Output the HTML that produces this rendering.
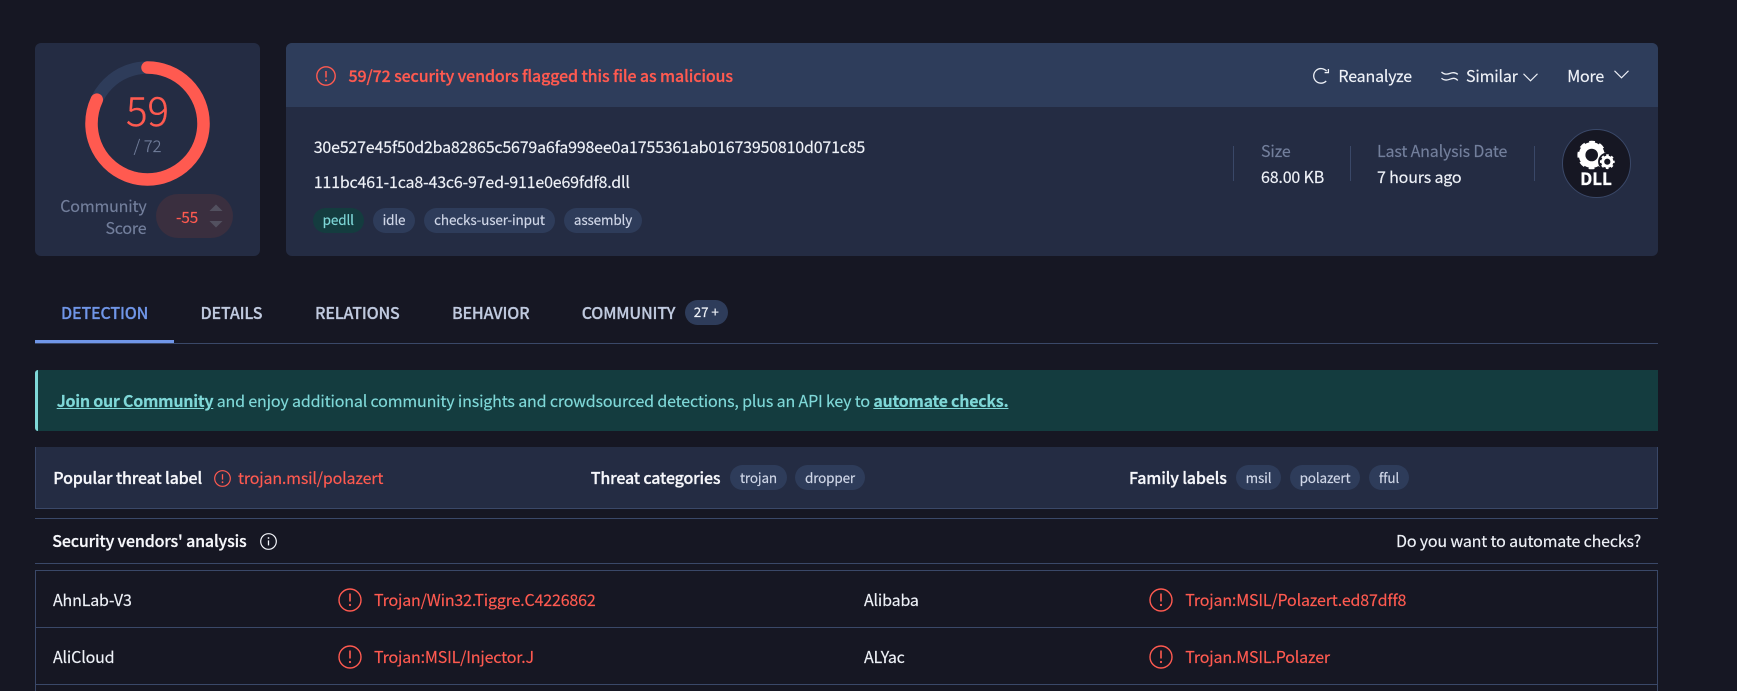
<!DOCTYPE html>
<html lang="en"><head><meta charset="utf-8"><title>Detection</title>
<style>
html,body{margin:0;padding:0;background:#161723;width:1737px;height:691px;overflow:hidden}
body{position:relative;font-family:"Noto Sans CJK JP","Noto Sans CJK SC","Liberation Sans",sans-serif;font-size:16px;color:#eef1f7}
div,svg,span.a{position:absolute}
.t{white-space:nowrap;line-height:24px;height:24px;letter-spacing:-.17px;-webkit-text-stroke:.15px currentColor}
.m{font-weight:500;color:#f6f7fb;-webkit-text-stroke:.25px currentColor}
.r{color:#ff5a50}
.g{color:#737f9c}
.p{height:25px;line-height:24px;border-radius:13px;background:#2e3c5a;text-align:center;font-size:13.5px;letter-spacing:-.15px;color:#d0d7e8;white-space:nowrap;-webkit-text-stroke:.15px currentColor}
.u{line-height:23px}
.tab{font-weight:500;font-size:16px;color:#c0cadf;-webkit-text-stroke:.25px currentColor}
.ln{background:#3a4868;height:1px}
.sep{background:#3a4868;width:1px;height:35px;top:146px}
svg{overflow:visible}
a{color:inherit;font-weight:700;text-decoration:underline;letter-spacing:-.26px}
</style></head><body>

<div style="left:35px;top:43px;width:225px;height:213px;background:#242c43;border-radius:6px"></div>
<svg style="left:0;top:0" width="300" height="260"><circle cx="147.5" cy="123.5" r="56" fill="none" stroke="#2e3c5a" stroke-width="12.5"/><circle cx="147.5" cy="123.5" r="56" fill="none" stroke="#ff5a50" stroke-width="12.5" stroke-linecap="round" stroke-dasharray="288.2 351.9" transform="rotate(-90 147.5 123.5)"/></svg>
<div class="t r" style="left:85px;width:125px;text-align:center;top:85px;font-size:40px;line-height:48px;height:48px;font-weight:300;letter-spacing:0;-webkit-text-stroke:.4px #ff5a50">59</div>
<div class="t g" style="left:85px;width:125px;text-align:center;top:132.5px;font-size:16.5px;font-weight:300;letter-spacing:0">/ 72</div>
<div class="t g" style="left:40px;width:106.5px;text-align:right;top:193px">Community</div>
<div class="t g" style="left:40px;width:106.5px;text-align:right;top:215px">Score</div>
<div style="left:156px;top:194px;width:77px;height:44px;border-radius:22px;background:#3a2f3f"></div>
<div class="t r" style="left:176px;top:204.5px;font-size:15.5px">-55</div>
<svg style="left:0;top:0" width="300" height="260"><path d="M209.5 211 L216 204.5 L222.5 211Z" fill="#52505f"/><path d="M209.5 221 L216 227.5 L222.5 221Z" fill="#52505f"/></svg>

<div style="left:286px;top:43px;width:1372px;height:213px;background:#242c43;border-radius:6px"></div>
<div style="left:286px;top:43px;width:1372px;height:64px;background:#2e3d5b;border-radius:6px 6px 0 0"></div>
<svg style="left:316px;top:66px" width="20" height="20" viewBox="0 0 20 20"><circle cx="10" cy="10" r="9.2" fill="none" stroke="#ff5a50" stroke-width="1.4"/><path d="M10 5v6.5" stroke="#ff5a50" stroke-width="1.5"/><circle cx="10" cy="14.4" r="1" fill="#ff5a50"/></svg>
<div class="t r" style="left:348.5px;top:63px;font-weight:500;letter-spacing:-.125px;-webkit-text-stroke:.25px #ff5a50">59/72 security vendors flagged this file as malicious</div>

<svg style="left:1314px;top:68px" width="17" height="17" viewBox="0 0 17 17"><path d="M12.6 3.2A7.3 7.3 0 1 0 12.2 13" fill="none" stroke="#eef1f7" stroke-width="1.3"/><path d="M14.4 1V4.6H10.6" fill="none" stroke="#eef1f7" stroke-width="1.3"/></svg>
<div class="t" style="left:1338.4px;top:63px">Reanalyze</div>
<svg style="left:1441px;top:70.5px" width="18" height="11" viewBox="0 0 18 11"><path d="M0.5 1C3.5 4 6.5 3.4 9 2.4S14 1 16.8 3.4M0.5 7.2C3 9.6 6 9.4 9 8.2S14 6.6 16.8 9.4" fill="none" stroke="#eef1f7" stroke-width="1.3"/></svg>
<div class="t" style="left:1466px;top:63px">Similar</div>
<svg style="left:1522.5px;top:73px" width="15" height="9" viewBox="0 0 15 9"><path d="M0.5 0.8L7.5 7.8L14.5 0.8" fill="none" stroke="#eef1f7" stroke-width="1.1"/></svg>
<div class="t" style="left:1567.2px;top:63px">More</div>
<svg style="left:1613.5px;top:70px" width="15" height="9" viewBox="0 0 15 9"><path d="M0.5 0.8L7.5 7.8L14.5 0.8" fill="none" stroke="#eef1f7" stroke-width="1.1"/></svg>

<div class="t" style="left:313.7px;top:134px;letter-spacing:-.19px">30e527e45f50d2ba82865c5679a6fa998ee0a1755361ab01673950810d071c85</div>
<div class="t" style="left:313.7px;top:169px">111bc461-1ca8-43c6-97ed-911e0e69fdf8.dll</div>
<div class="p u" style="left:313px;top:208px;width:50.5px;background:#143c3f;color:#7fd8d8">pedll</div>
<div class="p u" style="left:373px;top:208px;width:42px">idle</div>
<div class="p u" style="left:424px;top:208px;width:131px">checks-user-input</div>
<div class="p u" style="left:564px;top:208px;width:78px">assembly</div>

<div class="sep" style="left:1233px"></div>
<div class="sep" style="left:1350px"></div>
<div class="sep" style="left:1534px"></div>
<div class="t g" style="left:1261px;top:138px">Size</div>
<div class="t" style="left:1261px;top:164px">68.00 KB</div>
<div class="t g" style="left:1377px;top:138px">Last Analysis Date</div>
<div class="t" style="left:1377px;top:164px">7 hours ago</div>

<div style="left:1561.5px;top:129px;width:67px;height:67px;border-radius:50%;background:#161723;border:1px solid #3a4868"></div>
<svg style="left:1561px;top:129px" width="70" height="70" viewBox="1561 129 70 70">
<circle cx="1591.7" cy="155" r="9.6" fill="none" stroke="#fff" stroke-width="6.6"/>
<circle cx="1591.7" cy="155" r="12.8" fill="none" stroke="#fff" stroke-width="3" stroke-dasharray="5.6 4.45" stroke-dashoffset="2.8"/>
<circle cx="1607.3" cy="161.7" r="9.2" fill="#161723"/>
<circle cx="1607.3" cy="161.7" r="4.6" fill="none" stroke="#fff" stroke-width="3"/>
<circle cx="1607.3" cy="161.7" r="6.4" fill="none" stroke="#fff" stroke-width="2" stroke-dasharray="2.6 2.43" stroke-dashoffset="1.3"/>
<text x="1596" y="185" text-anchor="middle" font-size="17" font-weight="700" stroke="#fff" stroke-width=".3" fill="#fff" font-family="'Noto Sans CJK JP',sans-serif">DLL</text>
</svg>

<div class="t tab" style="left:61px;top:300px;color:#7096e8">DETECTION</div>
<div class="t tab" style="left:200.5px;top:300px">DETAILS</div>
<div class="t tab" style="left:315px;top:300px">RELATIONS</div>
<div class="t tab" style="left:452px;top:300px">BEHAVIOR</div>
<div class="t tab" style="left:581.7px;top:300px">COMMUNITY</div>
<div class="p u" style="left:684.5px;top:300px;width:43.5px;color:#eef1f7">27 +</div>
<div class="ln" style="left:35px;top:343px;width:1623px"></div>
<div style="left:35px;top:340px;width:139px;height:3px;background:#7096e8"></div>

<div style="left:35px;top:370px;width:1620px;height:61px;background:#143c3f;border-left:3px solid #7fd8d8;border-radius:3px 0 0 3px"></div>
<div class="t" style="left:56.7px;top:388px;color:#7fd8d8;letter-spacing:-.157px"><a>Join our Community</a> and enjoy additional community insights and crowdsourced detections, plus an API key to <a>automate checks.</a></div>

<div style="left:35px;top:447px;width:1621px;height:61px;background:#242c43;border:1px solid #3a4868;border-top:0"></div>
<div class="t m" style="left:53.3px;top:465px">Popular threat label</div>
<svg style="left:214px;top:469.5px" width="17" height="17" viewBox="0 0 17 17"><circle cx="8.5" cy="8.5" r="7.8" fill="none" stroke="#ff5a50" stroke-width="1.2"/><path d="M8.5 4.2v5.4" stroke="#ff5a50" stroke-width="1.3"/><circle cx="8.5" cy="12.2" r=".9" fill="#ff5a50"/></svg>
<div class="t r" style="left:238px;top:465px">trojan.msil/polazert</div>
<div class="t m" style="left:590.8px;top:465px">Threat categories</div>
<div class="p" style="left:730px;top:465px;width:57px">trojan</div>
<div class="p" style="left:795px;top:465px;width:70px">dropper</div>
<div class="t m" style="left:1129px;top:465px">Family labels</div>
<div class="p" style="left:1236px;top:465px;width:45px">msil</div>
<div class="p" style="left:1290px;top:465px;width:70px">polazert</div>
<div class="p" style="left:1369px;top:465px;width:40px">fful</div>

<div class="ln" style="left:35px;top:518px;width:1623px"></div>
<div class="t m" style="left:52.3px;top:528px">Security vendors' analysis</div>
<svg style="left:259.5px;top:533px" width="17" height="17" viewBox="0 0 17 17"><circle cx="8.5" cy="8.5" r="7.8" fill="none" stroke="#f3f5fa" stroke-width="1.2"/><path d="M8.5 7.4v5" stroke="#f3f5fa" stroke-width="1.3"/><circle cx="8.5" cy="5" r=".9" fill="#f3f5fa"/></svg>
<div class="t" style="left:1396px;top:528px">Do you want to automate checks?</div>
<div class="ln" style="left:35px;top:563px;width:1623px"></div>

<div style="left:35px;top:570px;width:1621px;height:125px;border:1px solid #3a4868"></div>
<div class="ln" style="left:35px;top:627px;width:1623px"></div>
<div class="ln" style="left:35px;top:684px;width:1623px"></div>

<div class="t" style="left:53px;top:587px">AhnLab-V3</div>
<svg style="left:338px;top:588px" width="24" height="24" viewBox="0 0 24 24"><circle cx="12" cy="12" r="11" fill="none" stroke="#ff5a50" stroke-width="1.4"/><path d="M12 5.5v8" stroke="#ff5a50" stroke-width="1.6"/><circle cx="12" cy="17" r="1.1" fill="#ff5a50"/></svg>
<div class="t r" style="left:374px;top:587px">Trojan/Win32.Tiggre.C4226862</div>
<div class="t" style="left:864px;top:587px">Alibaba</div>
<svg style="left:1149px;top:588px" width="24" height="24" viewBox="0 0 24 24"><circle cx="12" cy="12" r="11" fill="none" stroke="#ff5a50" stroke-width="1.4"/><path d="M12 5.5v8" stroke="#ff5a50" stroke-width="1.6"/><circle cx="12" cy="17" r="1.1" fill="#ff5a50"/></svg>
<div class="t r" style="left:1185.3px;top:587px">Trojan:MSIL/Polazert.ed87dff8</div>

<div class="t" style="left:53px;top:644px">AliCloud</div>
<svg style="left:338px;top:645px" width="24" height="24" viewBox="0 0 24 24"><circle cx="12" cy="12" r="11" fill="none" stroke="#ff5a50" stroke-width="1.4"/><path d="M12 5.5v8" stroke="#ff5a50" stroke-width="1.6"/><circle cx="12" cy="17" r="1.1" fill="#ff5a50"/></svg>
<div class="t r" style="left:374px;top:644px">Trojan:MSIL/Injector.J</div>
<div class="t" style="left:864px;top:644px">ALYac</div>
<svg style="left:1149px;top:645px" width="24" height="24" viewBox="0 0 24 24"><circle cx="12" cy="12" r="11" fill="none" stroke="#ff5a50" stroke-width="1.4"/><path d="M12 5.5v8" stroke="#ff5a50" stroke-width="1.6"/><circle cx="12" cy="17" r="1.1" fill="#ff5a50"/></svg>
<div class="t r" style="left:1185.3px;top:644px">Trojan.MSIL.Polazer</div>

</body></html>
